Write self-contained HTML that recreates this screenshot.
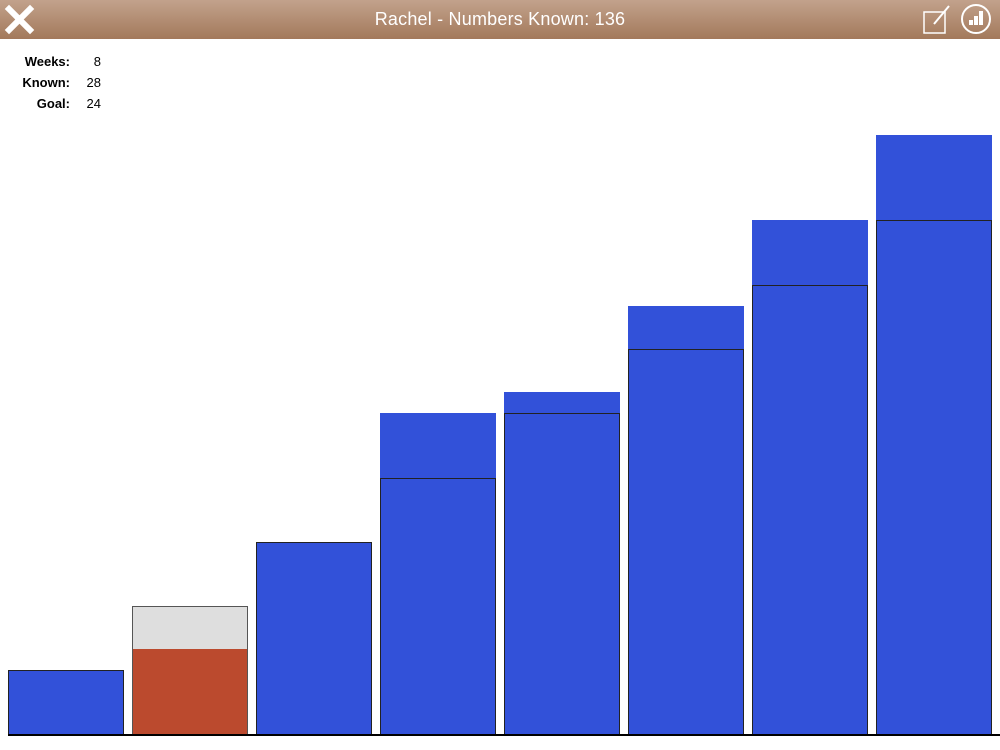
<!DOCTYPE html>
<html><head><meta charset="utf-8"><style>
*{margin:0;padding:0;box-sizing:border-box}
body{width:1000px;height:750px;background:#fff;position:relative;overflow:hidden;font-family:"Liberation Sans",sans-serif}
.hdr{position:absolute;left:0;top:0;width:1000px;height:39px;background:linear-gradient(#c2a28c,#a3795b)}
.title{position:absolute;left:0;width:1000px;top:9px;text-align:center;color:#fff;font-size:18px;letter-spacing:0.2px}
.lb{position:absolute;left:0;width:70px;text-align:right;font-size:13px;font-weight:bold}
.vl{position:absolute;left:70px;width:31px;text-align:right;font-size:13px}
.b{position:absolute;width:116px}
.top{position:absolute;background:#3251d9}
.bord{border:1px solid #222;background:#3251d9}
</style></head><body>
<div class="hdr">
<svg style="position:absolute;left:4px;top:4px" width="31" height="31" viewBox="0 0 31 31"><path d="M5 5L26 26M26 5L5 26" stroke="#fff" stroke-width="6" stroke-linecap="square"/></svg>
<div class="title">Rachel - Numbers Known: 136</div>
<svg style="position:absolute;left:920px;top:4px" width="32" height="30" viewBox="0 0 32 30"><rect x="4" y="8" width="21" height="21" fill="none" stroke="#fff" stroke-width="1.5"/><path d="M14 20L29 2" stroke="#fff" stroke-width="2"/></svg>
<svg style="position:absolute;left:960px;top:3px" width="34" height="34" viewBox="0 0 34 34"><circle cx="16" cy="16" r="14" fill="none" stroke="#fff" stroke-width="2"/><rect x="9" y="17" width="4" height="5" fill="#fff"/><rect x="14" y="13" width="4" height="9" fill="#fff"/><rect x="19" y="8" width="4" height="14" fill="#fff"/></svg>
</div>
<div class="lb" style="top:54px">Weeks:</div><div class="vl" style="top:54px">8</div>
<div class="lb" style="top:75px">Known:</div><div class="vl" style="top:75px">28</div>
<div class="lb" style="top:96px">Goal:</div><div class="vl" style="top:96px">24</div>

<div class="b bord" style="left:8px;top:670px;height:65px"></div>
<div class="b" style="left:132px;top:606px;height:129px;border:1px solid #555;background:#dedede"></div>
<div class="b" style="left:132px;top:649px;height:86px;background:#bb4a2e;border:1px solid #555;border-top:none"></div>
<div class="b bord" style="left:256px;top:542px;height:193px"></div>

<div class="b top" style="left:380px;top:413px;height:66px"></div>
<div class="b bord" style="left:380px;top:478px;height:257px"></div>
<div class="b top" style="left:504px;top:392px;height:22px"></div>
<div class="b bord" style="left:504px;top:413px;height:322px"></div>
<div class="b top" style="left:628px;top:306px;height:44px"></div>
<div class="b bord" style="left:628px;top:349px;height:386px"></div>
<div class="b top" style="left:752px;top:220px;height:66px"></div>
<div class="b bord" style="left:752px;top:285px;height:450px"></div>
<div class="b top" style="left:876px;top:135px;height:86px"></div>
<div class="b bord" style="left:876px;top:220px;height:515px"></div>

<div style="position:absolute;left:8px;top:734px;width:992px;height:2px;background:#000"></div>
</body></html>
